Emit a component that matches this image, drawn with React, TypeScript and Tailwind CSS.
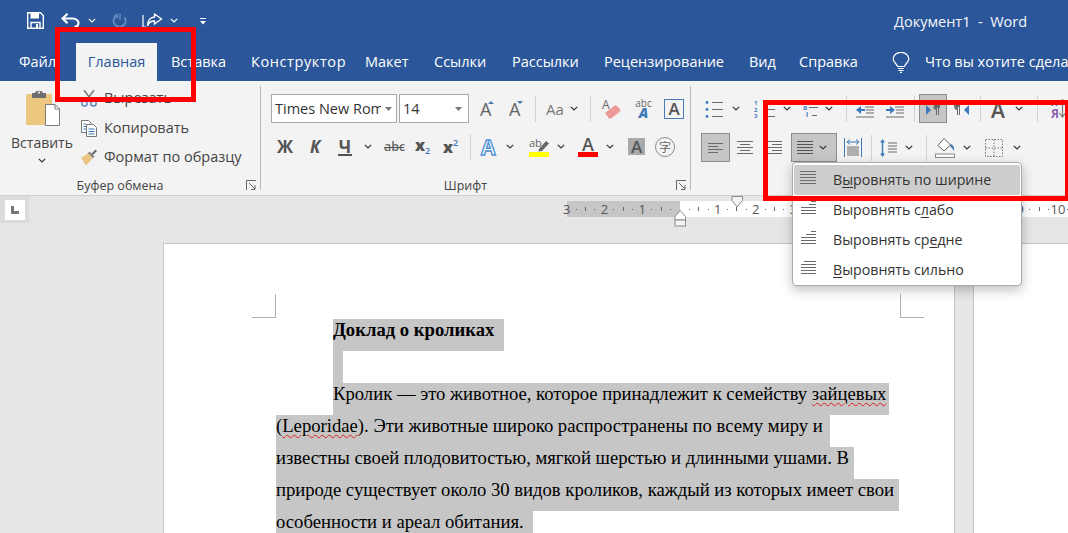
import React from "react";

const Chev = ({ className = "", color = "#333" }: { className?: string; color?: string }) => (
  <svg width="8" height="5" viewBox="0 0 8 5" className={"shrink-0 " + className}>
    <path d="M0.8 0.8 L4 4 L7.2 0.8" fill="none" stroke={color} strokeWidth="1.2" />
  </svg>
);

const Lines = ({ w, h, lines, className = "", color = "#6a6a6a" }: { w: number; h: number; lines: number[][]; className?: string; color?: string }) => (
  <svg width={w} height={h} viewBox={`0 0 ${w} ${h}`} className={"shrink-0 " + className}>
    {lines.map((l, i) => (
      <rect key={i} x={l[0]} y={l[2]} width={l[1] - l[0]} height="1" fill={color} />
    ))}
  </svg>
);

const Sep = ({ className = "" }: { className?: string }) => <div className={"w-px h-[26px] bg-[#d2d2d2] shrink-0 " + className} />;

const Launcher = () => (
  <svg width="11" height="11" viewBox="0 0 11 11" className="absolute right-[3px] top-[-2px]">
    <path d="M0.5 10 V0.5 H10" fill="none" stroke="#666" />
    <path d="M3 3 L9 9 M9 5 V9.5 H5" fill="none" stroke="#666" />
  </svg>
);

const F = "'Open Sans', 'Noto Sans', sans-serif";

function TitleBar() {
  return (
    <div className="h-[43px] bg-[#2b579a] flex items-center text-white shrink-0">
      <svg width="17" height="17" viewBox="0 0 17 17" className="ml-[27px] mb-[2px] shrink-0">
        <path d="M0.7 0.7 H13.5 L16.3 3.5 V16.3 H0.7 Z" fill="none" stroke="#fff" strokeWidth="1.4" />
        <rect x="3.5" y="1" width="8.5" height="5.5" fill="#fff" />
        <path d="M4 16 V10.5 H13 V16" fill="none" stroke="#fff" strokeWidth="1.4" />
        <rect x="9" y="12" width="2" height="4" fill="#fff" />
      </svg>
      <svg width="19" height="15" viewBox="0 0 19 15" className="ml-[17px] mb-[2px] shrink-0">
        <path d="M1.5 5.5 H11.5 C15.5 5.5 17.5 8 17.5 10 C17.5 12 16 13.5 13.5 14" fill="none" stroke="#fff" strokeWidth="2.2" />
        <path d="M6.5 0.8 L1.5 5.5 L6.5 10.2" fill="none" stroke="#fff" strokeWidth="2.2" />
      </svg>
      <Chev className="ml-[8px] mb-[2px]" color="#fff" />
      <svg width="17" height="15" viewBox="0 0 17 15" className="ml-[15px] mb-[2px] shrink-0">
        <path d="M5.5 2.6 A6 6 0 1 0 13.5 4.2" fill="none" stroke="#6288bd" strokeWidth="2" />
        <path d="M7 0 V6 L2.5 3 Z" fill="#6288bd" />
        <path d="M9 0.5 L9 7" stroke="#6288bd" strokeWidth="1.6" />
      </svg>
      <svg width="21" height="15" viewBox="0 0 21 15" className="ml-[14px] mb-[2px] shrink-0">
        <path d="M1 2 V14 H4" fill="none" stroke="#fff" strokeWidth="1.2" />
        <path d="M12.5 1 L19.5 6 L12.5 11 V8 C9 8 6.5 9.5 5.5 13 C5.5 7.5 8.5 4.2 12.5 4 Z" fill="none" stroke="#fff" strokeWidth="1.3" />
      </svg>
      <Chev className="ml-[7px] mb-[2px]" color="#fff" />
      <svg width="6" height="7" viewBox="0 0 6 7" className="ml-[22px] shrink-0">
        <rect x="0" y="0" width="6" height="1" fill="#fff" />
        <path d="M0 3 H6 L3 6.5 Z" fill="#fff" />
      </svg>
      <div className="ml-[688px] text-[14.5px] whitespace-pre text-[#f4f6fa]">Документ1  -  Word</div>
    </div>
  );
}

function TabsRow() {
  return (
    <div className="h-[38px] bg-[#2b579a] flex items-center text-white text-[14.5px] whitespace-nowrap shrink-0 overflow-hidden">
      <div className="w-[76px] pl-[19px] shrink-0">Файл</div>
      <div className="w-[81px] h-full bg-[#f3f3f3] text-[#2b579a] flex items-center justify-center shrink-0">Главная</div>
      <div className="w-[94px] pl-[14px] shrink-0">Вставка</div>
      <div className="w-[114px] shrink-0 tracking-[0.6px]">Конструктор</div>
      <div className="w-[69px] shrink-0">Макет</div>
      <div className="w-[78px] shrink-0">Ссылки</div>
      <div className="w-[92px] shrink-0">Рассылки</div>
      <div className="w-[145px] shrink-0">Рецензирование</div>
      <div className="w-[50px] shrink-0">Вид</div>
      <div className="w-[93px] shrink-0">Справка</div>
      <svg width="18" height="21" viewBox="0 0 18 21" className="shrink-0">
        <path d="M5.5 14.5 C5 11.5 1.2 10.5 1.2 7 A7.7 6.6 0 0 1 16.8 7 C16.8 10.5 13 11.5 12.5 14.5 Z" fill="none" stroke="#fff" strokeWidth="1.2" />
        <path d="M6 16.5 H12 M6.5 18.5 H11.5 M8 20.4 H10" stroke="#fff" strokeWidth="1.2" />
      </svg>
      <div className="ml-[15px] shrink-0">Что вы хотите сделать?</div>
    </div>
  );
}

function Clipboard() {
  return (
    <div className="w-[261px] h-[104px] mt-[5px] border-r border-[#b9b9b9] flex flex-col shrink-0">
      <div className="flex-1 flex">
        <div className="w-[76px] flex flex-col items-center pl-[8px] pt-[3px]">
          <svg width="34" height="37" viewBox="0 0 34 37" className="shrink-0 ml-[2px]">
            <rect x="0" y="5" width="26" height="31" rx="1.5" fill="#edc67f" />
            <path d="M9 4 C9 1 17 1 17 4 H20 V9 H6 V4 Z" fill="#6e6e6e" />
            <circle cx="13" cy="3.6" r="1.1" fill="#f3f3f3" />
            <path d="M19.5 15.5 H29 L33.5 20 V36.5 H19.5 Z" fill="#fff" stroke="#7a7a7a" />
            <path d="M29 15.5 V20 H33.5" fill="none" stroke="#7a7a7a" />
          </svg>
          <div className="mt-[7px] text-[14px] leading-[20px] whitespace-nowrap ml-[-8px] pl-[8px]">Вставить</div>
          <Chev className="mt-[5px]" />
        </div>
        <div className="flex flex-col gap-[5px] pl-[5px] text-[14.5px] whitespace-nowrap">
          <div className="h-[24px] flex items-center gap-[7px]">
            <svg width="16" height="17" viewBox="0 0 16 17" className="shrink-0">
              <path d="M3 0 L11 11 M13 0 L5 11" stroke="#777" strokeWidth="1.5" fill="none" />
              <circle cx="3.5" cy="13.5" r="2.7" fill="none" stroke="#3b78b8" strokeWidth="1.2" />
              <circle cx="12.5" cy="13.5" r="2.7" fill="none" stroke="#3b78b8" strokeWidth="1.2" />
            </svg>
            Вырезать
          </div>
          <div className="h-[24px] mt-[1px] flex items-center gap-[7px]">
            <svg width="16" height="17" viewBox="0 0 16 17" className="shrink-0">
              <path d="M0.5 0.5 H7.5 L10 3 V12.5 H0.5 Z" fill="#fff" stroke="#777" />
              <path d="M2.5 4 H5 M2.5 6.5 H8 M2.5 9 H8" stroke="#3b78b8" />
              <path d="M5.5 4.5 H12.5 L15.5 7.5 V16.5 H5.5 Z" fill="#fff" stroke="#777" />
              <path d="M7.5 9 H13.5 M7.5 11.5 H13.5 M7.5 14 H13.5" stroke="#3b78b8" />
            </svg>
            Копировать
          </div>
          <div className="h-[24px] flex items-center gap-[7px]">
            <svg width="16" height="17" viewBox="0 0 16 17" className="shrink-0">
              <path d="M0 9 L7 4 L12 9 L5 16.5 C3 14 2 11 0 9 Z" fill="#eac586" />
              <path d="M7 4 L12 9 L13.5 7.5 L8.5 2.8 Z" fill="#7a7a7a" />
              <path d="M10.5 4.5 L14.5 0.5 L16 2 L12 6 Z" fill="#6a6a6a" />
            </svg>
            Формат по образцу
          </div>
        </div>
      </div>
      <div className="h-[8px] relative flex items-center justify-center text-[12.5px] pr-[20px]">
        <span>Буфер обмена</span>
        <Launcher />
      </div>
    </div>
  );
}

function FontGroup() {
  return (
    <div className="w-[430px] h-[104px] mt-[5px] border-r border-[#b9b9b9] flex flex-col shrink-0">
      <div className="flex-1 flex flex-col">
        <div className="flex items-center h-[29px] mt-[8px] pl-[10px]">
          <div className="w-[126px] h-[29px] bg-white border border-[#a9a9a9] flex items-center pl-[3px] relative overflow-hidden shrink-0">
            <span className="text-[14.5px] whitespace-nowrap w-[106px] overflow-hidden text-[#333]">Times New Roman</span>
            <svg width="7" height="4" viewBox="0 0 7 4" className="ml-[4px]"><path d="M0 0 H7 L3.5 4 Z" fill="#777" /></svg>
          </div>
          <div className="w-[70px] h-[29px] ml-[2px] bg-white border border-[#a9a9a9] flex items-center pl-[3px] justify-between pr-[6px] shrink-0">
            <span className="text-[14.5px] text-[#333]">14</span>
            <svg width="7" height="4" viewBox="0 0 7 4"><path d="M0 0 H7 L3.5 4 Z" fill="#777" /></svg>
          </div>
          <svg width="16" height="17" viewBox="0 0 16 17" className="ml-[11px] shrink-0 overflow-visible">
            <text x="0" y="16" fontSize="18" fill="#666" fontFamily={F}>A</text>
            <path d="M8 4 L11 1 L14 4 Z" fill="#4a7ab5" />
          </svg>
          <svg width="16" height="17" viewBox="0 0 16 17" className="ml-[13px] shrink-0 overflow-visible">
            <text x="0" y="16" fontSize="18" fill="#666" fontFamily={F}>A</text>
            <path d="M8 1 L14 1 L11 4 Z" fill="#4a7ab5" />
          </svg>
          <Sep className="ml-[10px]" />
          <svg width="18" height="16" viewBox="0 0 18 16" className="ml-[10px] shrink-0 overflow-visible">
            <text x="0" y="14" fontSize="15" fill="#777" fontFamily={F}>Aa</text>
          </svg>
          <Chev className="ml-[6px]" />
          <Sep className="ml-[12px]" />
          <svg width="19" height="20" viewBox="0 0 19 20" className="ml-[11px] shrink-0 overflow-visible">
            <text x="0" y="10" fontSize="12" fill="#666" fontFamily={F}>A</text>
            <path d="M3 14 L12 7 C13 6 14 6 15 7 L18 10 C18.6 11 18.6 12 17.6 13 L9 19.5 H7 Z" fill="#ef9a9a" />
          </svg>
          <div className="ml-[14px] w-[17px] h-[19px] flex flex-col items-center shrink-0 leading-none">
            <span className="text-[10px] h-[8px] leading-[8px] text-[#666]">abc</span>
            <span className="text-[14px] h-[11px] leading-[11px] font-extrabold italic text-[#3e78bb]">A</span>
          </div>
          <div className="w-[20px] h-[20px] ml-[12px] border border-[#4a7ab5] flex items-center justify-center text-[17px] font-semibold text-[#555] leading-none">A</div>
        </div>
        <div className="flex items-center h-[29px] mt-[9px] pl-[15px] text-[#555]">
          <div className="w-[18px] text-center font-bold text-[17px]">Ж</div>
          <div className="w-[18px] ml-[12px] text-center font-bold italic text-[17px]">К</div>
          <div className="w-[14px] ml-[14px] text-center font-bold text-[17px] leading-[19px] border-b-[2px] border-[#555] h-[19px]">Ч</div>
          <Chev className="ml-[12px]" />
          <svg width="20" height="14" viewBox="0 0 20 14" className="ml-[12px] shrink-0 overflow-visible">
            <text x="0" y="11" fontSize="12.5" fontWeight="600" fill="#666" fontFamily={F}>abc</text>
            <rect x="0" y="7" width="20" height="1" fill="#555" />
          </svg>
          <svg width="16" height="17" viewBox="0 0 16 17" className="ml-[11px] shrink-0 overflow-visible">
            <text x="0" y="13" fontSize="16" fontWeight="800" fill="#555" fontFamily={F}>x</text>
            <text x="10" y="16" fontSize="9" fontWeight="600" fill="#3e78bb" fontFamily={F}>2</text>
          </svg>
          <svg width="16" height="17" viewBox="0 0 16 17" className="ml-[12px] shrink-0 overflow-visible">
            <text x="0" y="15" fontSize="16" fontWeight="800" fill="#555" fontFamily={F}>x</text>
            <text x="10" y="8" fontSize="9" fontWeight="600" fill="#3e78bb" fontFamily={F}>2</text>
          </svg>
          <Sep className="ml-[11px]" />
          <svg width="18" height="18" viewBox="0 0 18 18" className="ml-[10px] shrink-0 overflow-visible">
            <text x="0" y="16.5" fontSize="21" fontWeight="700" fill="#fff" stroke="#4a8fd6" strokeWidth="1.3" fontFamily={F}>A</text>
          </svg>
          <Chev className="ml-[7px]" />
          <div className="ml-[15px] w-[20px] h-[20px] flex flex-col shrink-0">
            <svg width="20" height="15" viewBox="0 0 20 15" className="overflow-visible">
              <text x="0" y="10" fontSize="11" fill="#666" fontFamily={F}>ab</text>
              <path d="M10 12 L17 4 L20 6.5 L13 14 L9.5 14.5 Z" fill="#666" />
            </svg>
            <div className="h-[5px] bg-[#ffff00]" />
          </div>
          <Chev className="ml-[8px]" />
          <div className="ml-[13px] w-[20px] h-[20px] flex flex-col items-center shrink-0">
            <div className="h-[15px] text-[18px] font-semibold leading-[15px] text-[#555]">A</div>
            <div className="h-[5px] w-full bg-[#ff0000]" />
          </div>
          <Chev className="ml-[8px]" />
          <div className="ml-[14px] w-[17px] h-[17px] bg-[#a9a9a9] flex items-center justify-center text-[17px] font-semibold leading-none text-[#555]">A</div>
          <div className="ml-[10px] w-[20px] h-[20px] rounded-full border border-[#8a8a8a] flex items-center justify-center text-[12px] text-[#666] font-['Noto_Sans_CJK_SC',sans-serif] leading-none">字</div>
        </div>
      </div>
      <div className="h-[8px] relative flex items-center justify-center text-[12.5px] pr-[20px]">
        <span>Шрифт</span>
        <Launcher />
      </div>
    </div>
  );
}

function ParaGroup() {
  return (
    <div className="flex-1 h-[104px] mt-[5px] flex flex-col overflow-hidden">
      <div className="flex items-center h-[29px] mt-[8px]">
        <svg width="18" height="18" viewBox="0 0 18 18" className="ml-[14px] shrink-0">
          <circle cx="2" cy="2.5" r="1.4" fill="#3e78bb" /><circle cx="2" cy="9.5" r="1.4" fill="#3e78bb" /><circle cx="2" cy="16.5" r="1.4" fill="#3e78bb" />
          <path d="M7 2.5 H18 M7 9.5 H18 M7 16.5 H18" stroke="#6a6a6a" />
        </svg>
        <Chev className="ml-[9px]" />
        <svg width="21" height="18" viewBox="0 0 21 18" className="ml-[14px] shrink-0 overflow-visible">
          <text x="0" y="5" fontSize="6" fontWeight="700" fill="#3e78bb" fontFamily={F}>1</text>
          <text x="0" y="11.5" fontSize="6" fontWeight="700" fill="#3e78bb" fontFamily={F}>2</text>
          <text x="0" y="18" fontSize="6" fontWeight="700" fill="#3e78bb" fontFamily={F}>3</text>
          <path d="M9 2.5 H21 M9 9.5 H21 M9 16.5 H21" stroke="#6a6a6a" />
        </svg>
        <Chev className="ml-[8px]" />
        <svg width="17" height="18" viewBox="0 0 17 18" className="ml-[12px] shrink-0 overflow-visible">
          <text x="0" y="10" fontSize="7" fontWeight="700" fill="#3e78bb" fontFamily={F}>a</text>
          <text x="3" y="17" fontSize="7" fontWeight="700" fill="#3e78bb" fontFamily={F}>i</text>
          <path d="M6 7.5 H15 M9 15.5 H14" stroke="#6a6a6a" />
        </svg>
        <Chev className="ml-[5px]" />
        <Sep className="ml-[13px]" />
        <svg width="19" height="13" viewBox="0 0 19 13" className="ml-[9px] shrink-0 mt-[7px]">
          <path d="M0 4 L5 0 V3 H9 V5 H5 V8 Z" fill="#3e78bb" />
          <path d="M9 1 H18 M10 4 H18 M10 7 H18 M0 11 H18" stroke="#6a6a6a" />
        </svg>
        <svg width="19" height="13" viewBox="0 0 19 13" className="ml-[11px] shrink-0 mt-[7px]">
          <path d="M9 4 L4 0 V3 H0 V5 H4 V8 Z" fill="#3e78bb" />
          <path d="M9 1 H18 M10 4 H18 M10 7 H18 M0 11 H18" stroke="#6a6a6a" />
        </svg>
        <Sep className="ml-[9px]" />
        <div className="ml-[4px] w-[28px] h-[29px] bg-[#c6c6c6] border border-[#8d8d8d] flex items-center justify-center shrink-0">
          <svg width="14" height="10" viewBox="0 0 14 10" className="mt-[2px]">
            <path d="M0 0 L5 5 L0 10 Z" fill="#3e78bb" />
            <path d="M8 0 H14 V3 H13 V10 H12 V3 H11 V10 H10 V5 C7 5 7 0 9 0 Z" fill="#6a6a6a" />
          </svg>
        </div>
        <svg width="16" height="10" viewBox="0 0 16 10" className="ml-[7px] shrink-0 mt-[2px]">
          <path d="M0 0 H6 V10 H5 V2 H4 V10 H3 V5 C0 5 0 0 0 0 Z" fill="#6a6a6a" />
          <path d="M15 0 L10 5 L15 10 Z" fill="#3e78bb" />
        </svg>
        <Sep className="ml-[10px]" />
        <div className="ml-[10px] w-[17px] h-[20px] text-[21px] font-semibold text-[#555] leading-[20px] mt-[2px] shrink-0">A</div>
        <Chev className="ml-[7px]" />
        <Sep className="ml-[14px]" />
        <div className="ml-[13px] w-[18px] h-[22px] flex shrink-0">
          <div className="flex flex-col w-[7px] font-bold">
            <span className="text-[9px] h-[10px] leading-[9px] text-[#3e78bb]">А</span>
            <span className="text-[12px] h-[12px] leading-[12px] text-[#8e62b5]">Я</span>
          </div>
          <svg width="9" height="22" viewBox="0 0 9 22" className="shrink-0">
            <path d="M4.5 1 V19 M1.5 15 L4.5 19 L7.5 15" stroke="#777" strokeWidth="1.2" fill="none" />
          </svg>
        </div>
      </div>
      <div className="flex items-center h-[29px] mt-[10px]">
        <div className="ml-[10px] w-[29px] h-[29px] bg-[#c6c6c6] border border-[#8d8d8d] flex items-center justify-center shrink-0">
          <Lines w={15} h={10} lines={[[0, 15, 0], [0, 10, 3], [0, 15, 6], [0, 10, 9]]} />
        </div>
        <Lines className="ml-[7px]" w={16} h={13} lines={[[0, 16, 0], [3, 13, 3], [0, 16, 6], [3, 13, 9], [0, 16, 12]]} />
        <Lines className="ml-[14px]" w={15} h={13} lines={[[0, 15, 0], [5, 15, 3], [0, 15, 6], [5, 15, 9], [0, 15, 12]]} />
        <div className="ml-[9px] w-[46px] h-[29px] bg-[#c6c6c6] border border-[#8d8d8d] flex items-center shrink-0">
          <Lines className="ml-[5px]" w={16} h={13} color="#555" lines={[[0, 16, 0], [0, 16, 3], [0, 16, 6], [0, 16, 9], [0, 16, 12]]} />
          <Chev className="ml-[6px]" />
        </div>
        <svg width="18" height="19" viewBox="0 0 18 19" className="ml-[7px] shrink-0">
          <path d="M0.5 0 V19 M17.5 0 V19" stroke="#3e78bb" />
          <path d="M3 4 H15 M3 4 L6 1.5 M3 4 L6 6.5 M15 4 L12 1.5 M15 4 L12 6.5" stroke="#3e78bb" fill="none" />
          <path d="M3 9 H15 M3 11 H15 M3 13 H15 M3 15 H15 M3 17 H15" stroke="#6a6a6a" />
        </svg>
        <Sep className="ml-[9px]" />
        <svg width="17" height="18" viewBox="0 0 17 18" className="ml-[8px] shrink-0">
          <path d="M2.5 0 L5 3.5 H3.2 V14.5 H5 L2.5 18 L0 14.5 H1.8 V3.5 H0 Z" fill="#3e78bb" />
          <path d="M8 4 H17 M8 7 H17 M8 10 H17 M8 13 H17" stroke="#6a6a6a" />
        </svg>
        <Chev className="ml-[8px]" />
        <Sep className="ml-[13px]" />
        <svg width="20" height="20" viewBox="0 0 20 20" className="ml-[8px] shrink-0">
          <path d="M9 0.5 L15.5 7 L9 13 L3 7.5 Z" fill="#fff" stroke="#666" />
          <path d="M16 6 C19 8 19.5 10 19 13 C18 11 16 9 15 8 Z" fill="#3e78bb" />
          <rect x="0.5" y="16" width="19" height="3.5" fill="#fff" stroke="#8a8a8a" />
        </svg>
        <Chev className="ml-[8px]" />
        <svg width="18" height="18" viewBox="0 0 18 18" className="ml-[14px] shrink-0">
          <path d="M0.5 0.5 H17.5 V17.5 H0.5 Z M9 0.5 V17.5 M0.5 9 H17.5" fill="none" stroke="#777" strokeDasharray="1.5 1.5" />
        </svg>
        <Chev className="ml-[10px]" />
      </div>
    </div>
  );
}

function RulerCell({ n }: { n?: number }) {
  return (
    <div className="w-[37.8px] grid grid-cols-4 items-center text-[#555] shrink-0">
      <div className="h-[16px] flex items-center justify-center text-[13px] leading-none">{n}</div>
      <div className="flex justify-center"><div className="w-px h-px bg-[#666]" /></div>
      <div className="flex justify-center"><div className="w-px h-[4px] bg-[#666]" /></div>
      <div className="flex justify-center"><div className="w-px h-px bg-[#666]" /></div>
    </div>
  );
}

function Ruler() {
  return (
    <div className="h-[47px] flex items-start relative shrink-0">
      <div className="w-[29px] h-[27px] bg-[#dcdcdc] flex items-center justify-center shrink-0">
        <div className="w-[20px] h-[20px] bg-white flex items-center justify-center">
          <svg width="8" height="8" viewBox="0 0 8 8"><path d="M0 0 H3 V5 H8 V8 H0 Z" fill="#777" /></svg>
        </div>
      </div>
      <div className="ml-[537.6px] mt-[5px] h-[16px] w-[113.4px] bg-[#c6c6c6] flex shrink-0">
        <div className="flex ml-[-4.7px]">
          <RulerCell n={3} /><RulerCell n={2} /><RulerCell n={1} />
        </div>
      </div>
      <div className="mt-[5px] h-[16px] flex-1 bg-white flex overflow-hidden">
        <div className="flex ml-[-4.7px]">
          <RulerCell /><RulerCell n={1} /><RulerCell n={2} /><RulerCell n={3} /><RulerCell /><RulerCell /><RulerCell /><RulerCell /><RulerCell /><RulerCell n={9} /><RulerCell n={10} />
        </div>
      </div>
      <svg width="13" height="13" viewBox="0 0 13 13" className="absolute left-[731px] top-0">
        <path d="M1 0.5 H11.5 V4.5 L6.2 11 L1 4.5 Z" fill="#f3f3f3" stroke="#8a8a8a" />
      </svg>
      <svg width="13" height="18" viewBox="0 0 13 18" className="absolute left-[674px] top-[14px]">
        <path d="M6.2 0.5 L11.5 6.5 V10 H1 V6.5 Z" fill="#fff" stroke="#8a8a8a" />
        <rect x="1" y="10" width="10.5" height="6" fill="#f3f3f3" stroke="#8a8a8a" />
      </svg>
    </div>
  );
}

function Page() {
  const line = "h-[32px] leading-[21px] bg-[#c6c6c6] w-fit whitespace-pre";
  const wavy = "underline decoration-wavy decoration-[#e02020] decoration-1 underline-offset-2";
  return (
    <div className="w-[792px] bg-white border border-[#c6c6c6] relative pt-[75px] pl-[112px] text-black text-[18.67px] shrink-0 font-['Liberation_Serif',serif] h-[400px]">
      <div className="absolute left-[88px] top-[50px] w-[24px] h-[24px] border-r border-b border-[#b0b0b0]" />
      <div className="absolute left-[736px] top-[50px] w-[24px] h-[24px] border-l border-b border-[#b0b0b0]" />
      <div className={line + " ml-[57px] pr-[10px] font-bold"}>Доклад о кроликах</div>
      <div className="h-[32px] ml-[57px] w-[10px] bg-[#c6c6c6]"></div>
      <div className={line + " ml-[57px] pr-[3px]"}>Кролик — это животное, которое принадлежит к семейству <span className={wavy}>зайцевых</span></div>
      <div className={line + " pr-[7px]"}>(<span className={wavy}>Leporidae</span>). Эти животные широко распространены по всему миру и</div>
      <div className={line + " pr-[5px]"}>известны своей плодовитостью, мягкой шерстью и длинными ушами. В</div>
      <div className={line + " pr-[5px]"}>природе существует около 30 видов кроликов, каждый из которых имеет свои</div>
      <div className={line + " pr-[9px]"}>особенности и ареал обитания.</div>
    </div>
  );
}

function Menu() {
  const row = "h-[30px] flex items-center";
  const u = "underline underline-offset-2";
  return (
    <div className="absolute left-[792px] top-[162px] w-[230px] h-[124px] bg-white border border-[#ababab] rounded-[4px] shadow-[0_4px_12px_rgba(0,0,0,0.25)] px-px pt-[2px] text-[14.2px] text-[#333] whitespace-nowrap">
      <div className={row + " bg-[#cdcdcd] rounded-[2px]"}>
        <Lines className="ml-[6px] mb-[6px]" w={16} h={13} lines={[[0, 16, 0], [0, 16, 3], [0, 16, 6], [0, 16, 9], [0, 16, 12]]} />
        <span className="ml-[17px]">В<span className={u}>ы</span>ровнять по ширине</span>
      </div>
      <div className={row}>
        <Lines className="ml-[7px] mb-[6px]" w={15} h={13} lines={[[10, 15, 0], [8, 15, 3], [0, 15, 6], [0, 15, 9], [0, 15, 12]]} />
        <span className="ml-[17px]">Выровнять с<span className={u}>л</span>або</span>
      </div>
      <div className={row}>
        <Lines className="ml-[7px] mb-[6px]" w={15} h={13} lines={[[10, 15, 0], [5, 15, 3], [0, 15, 6], [0, 15, 9], [0, 15, 12]]} />
        <span className="ml-[17px]">Выровнять ср<span className={u}>е</span>дне</span>
      </div>
      <div className={row}>
        <Lines className="ml-[7px] mb-[6px]" w={15} h={13} lines={[[3, 15, 0], [0, 15, 3], [0, 15, 6], [0, 15, 9], [0, 15, 12]]} />
        <span className="ml-[17px]"><span className={u}>В</span>ыровнять сильно</span>
      </div>
    </div>
  );
}

export default function App() {
  return (
    <div className="relative w-[1068px] h-[533px] overflow-hidden flex flex-col bg-[#e6e6e6] text-[#444] font-['Open_Sans','Noto_Sans',sans-serif]">
      <TitleBar />
      <TabsRow />
      <div className="h-[115px] bg-[#f3f3f3] border-b border-[#cfcfcf] flex shrink-0 overflow-hidden">
        <Clipboard />
        <FontGroup />
        <ParaGroup />
      </div>
      <div className="flex-1 flex flex-col overflow-hidden">
        <Ruler />
        <div className="flex pl-[163px] gap-[18px]">
          <Page />
          <div className="flex-1 h-[400px] bg-white border-l border-t border-[#c6c6c6] relative" />
        </div>
      </div>
      <Menu />
      <div className="absolute left-[55px] top-[27px] w-[141px] h-[75px] border-[5px] border-[#ff0000]" />
      <div className="absolute left-[763px] top-[100px] w-[307px] h-[101px] border-[5px] border-[#ff0000]" />
    </div>
  );
}
